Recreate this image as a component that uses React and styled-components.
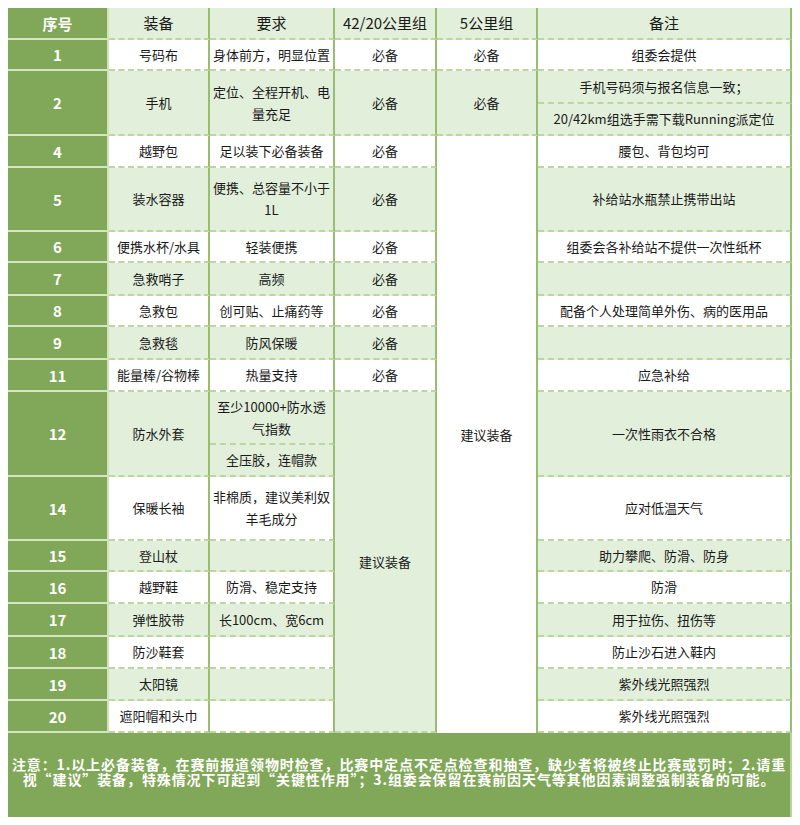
import React from "react";
import styled, { createGlobalStyle } from "styled-components";

const Global = createGlobalStyle`
  html, body { margin: 0; padding: 0; background: #ffffff; }
  body { font-family: "Noto Sans CJK SC", "Microsoft YaHei", sans-serif; color: #1e1e1e; }
  * { box-sizing: border-box; }
`;

const DARK = "#80a858";
const LIGHT = "#e2efda";
const VLINE = "#97bd71";
const HLINE = "#bcd6a2";

const Page = styled.div`
  padding: 8px;
`;

const Table = styled.div`
  display: grid;
  width: 784px;
  grid-template-columns: 101px 101px 125px 102px 101px 254px;
  grid-template-rows:
    32px 31px 33px 32px 32px 64px 31px 33px 31px 33px 32px
    53px 32px 64px 31px 32px 33px 32px 32px 32px 84px;
`;

const Cell = styled.div`
  grid-row: ${(p) => p.$row} / span ${(p) => p.$rs || 1};
  grid-column: ${(p) => p.$col} / span ${(p) => p.$cs || 1};
  display: flex;
  align-items: center;
  justify-content: center;
  text-align: center;
  padding: 0 2px;
  font-size: 13px;
  line-height: 22px;
  color: #1a1a1a;
  background: ${(p) => (p.$tone === "green" ? LIGHT : "#ffffff")};
  border-right: 2px solid ${VLINE};
  border-bottom: ${(p) => (p.$noBottom ? "none" : `2px dashed ${HLINE}`)};
`;

const HeadCell = styled(Cell)`
  font-size: 15px;
  background: ${LIGHT};
`;

const NumCell = styled.div`
  grid-row: ${(p) => p.$row} / span ${(p) => p.$rs || 1};
  grid-column: 1;
  display: flex;
  align-items: center;
  justify-content: center;
  background: ${DARK};
  color: #ffffff;
  font-weight: 700;
  font-size: 15px;
  border-right: 2px solid #cfe2bc;
  border-bottom: 2px solid #d3e5c1;
`;

const Note = styled.div`
  grid-row: 21;
  grid-column: 1 / span 6;
  display: flex;
  align-items: center;
  justify-content: center;
  text-align: center;
  background: ${DARK};
  color: #ffffff;
  font-weight: 700;
  font-size: 14px;
  line-height: 15.5px;
  letter-spacing: 0.9px;
  padding: 0 1px 6px;
  border-right: 2px solid #b9d39f;
`;

const headers = ["装备", "要求", "42/20公里组", "5公里组", "备注"];

// [row, col, rowSpan, tone, text, noBottom]
const cells = [
  [2, 2, 1, "white", "号码布"],
  [2, 3, 1, "white", "身体前方，明显位置"],
  [2, 4, 1, "white", "必备"],
  [2, 5, 1, "white", "必备"],
  [2, 6, 1, "white", "组委会提供"],
  [3, 2, 2, "green", "手机"],
  [3, 3, 2, "green", "定位、全程开机、电量充足"],
  [3, 4, 2, "green", "必备"],
  [3, 5, 2, "green", "必备"],
  [3, 6, 1, "green", "手机号码须与报名信息一致；"],
  [4, 6, 1, "green", "20/42km组选手需下载Running派定位"],
  [5, 2, 1, "white", "越野包"],
  [5, 3, 1, "white", "足以装下必备装备"],
  [5, 4, 1, "white", "必备"],
  [5, 5, 16, "white", "建议装备", true],
  [5, 6, 1, "white", "腰包、背包均可"],
  [6, 2, 1, "green", "装水容器"],
  [6, 3, 1, "green", "便携、总容量不小于1L"],
  [6, 4, 1, "green", "必备"],
  [6, 6, 1, "green", "补给站水瓶禁止携带出站"],
  [7, 2, 1, "white", "便携水杯/水具"],
  [7, 3, 1, "white", "轻装便携"],
  [7, 4, 1, "white", "必备"],
  [7, 6, 1, "white", "组委会各补给站不提供一次性纸杯"],
  [8, 2, 1, "green", "急救哨子"],
  [8, 3, 1, "green", "高频"],
  [8, 4, 1, "green", "必备"],
  [8, 6, 1, "green", ""],
  [9, 2, 1, "white", "急救包"],
  [9, 3, 1, "white", "创可贴、止痛药等"],
  [9, 4, 1, "white", "必备"],
  [9, 6, 1, "white", "配备个人处理简单外伤、病的医用品"],
  [10, 2, 1, "green", "急救毯"],
  [10, 3, 1, "green", "防风保暖"],
  [10, 4, 1, "green", "必备"],
  [10, 6, 1, "green", ""],
  [11, 2, 1, "white", "能量棒/谷物棒"],
  [11, 3, 1, "white", "热量支持"],
  [11, 4, 1, "white", "必备"],
  [11, 6, 1, "white", "应急补给"],
  [12, 2, 2, "green", "防水外套"],
  [12, 3, 1, "green", "至少10000+防水透气指数"],
  [13, 3, 1, "green", "全压胶，连帽款"],
  [12, 4, 9, "green", "建议装备"],
  [12, 6, 2, "green", "一次性雨衣不合格"],
  [14, 2, 1, "white", "保暖长袖"],
  [14, 3, 1, "white", "非棉质，建议美利奴羊毛成分"],
  [14, 6, 1, "white", "应对低温天气"],
  [15, 2, 1, "green", "登山杖"],
  [15, 3, 1, "green", ""],
  [15, 6, 1, "green", "助力攀爬、防滑、防身"],
  [16, 2, 1, "white", "越野鞋"],
  [16, 3, 1, "white", "防滑、稳定支持"],
  [16, 6, 1, "white", "防滑"],
  [17, 2, 1, "green", "弹性胶带"],
  [17, 3, 1, "green", "长100cm、宽6cm"],
  [17, 6, 1, "green", "用于拉伤、扭伤等"],
  [18, 2, 1, "white", "防沙鞋套"],
  [18, 3, 1, "white", ""],
  [18, 6, 1, "white", "防止沙石进入鞋内"],
  [19, 2, 1, "green", "太阳镜"],
  [19, 3, 1, "green", ""],
  [19, 6, 1, "green", "紫外线光照强烈"],
  [20, 2, 1, "white", "遮阳帽和头巾"],
  [20, 3, 1, "white", ""],
  [20, 6, 1, "white", "紫外线光照强烈"],
];

// [row, rowSpan, label]
const numbers = [
  [2, 1, "1"],
  [3, 2, "2"],
  [5, 1, "4"],
  [6, 1, "5"],
  [7, 1, "6"],
  [8, 1, "7"],
  [9, 1, "8"],
  [10, 1, "9"],
  [11, 1, "11"],
  [12, 2, "12"],
  [14, 1, "14"],
  [15, 1, "15"],
  [16, 1, "16"],
  [17, 1, "17"],
  [18, 1, "18"],
  [19, 1, "19"],
  [20, 1, "20"],
];

export default function App() {
  return (
    <Page>
      <Global />
      <Table>
        <NumCell $row={1}>序号</NumCell>
        {headers.map((h, i) => (
          <HeadCell key={h} $row={1} $col={i + 2}>
            {h}
          </HeadCell>
        ))}
        {numbers.map(([row, rs, label]) => (
          <NumCell key={label} $row={row} $rs={rs}>
            {label}
          </NumCell>
        ))}
        {cells.map(([row, col, rs, tone, text, noBottom]) => (
          <Cell
            key={`${row}-${col}`}
            $row={row}
            $col={col}
            $rs={rs}
            $tone={tone}
            $noBottom={noBottom}
          >
            {text}
          </Cell>
        ))}
        <Note>
          注意：1.以上必备装备，在赛前报道领物时检查，比赛中定点不定点检查和抽查，缺少者将被终止比赛或罚时；2.请重视“建议”装备，特殊情况下可起到“关键性作用”；3.组委会保留在赛前因天气等其他因素调整强制装备的可能。
        </Note>
      </Table>
    </Page>
  );
}
